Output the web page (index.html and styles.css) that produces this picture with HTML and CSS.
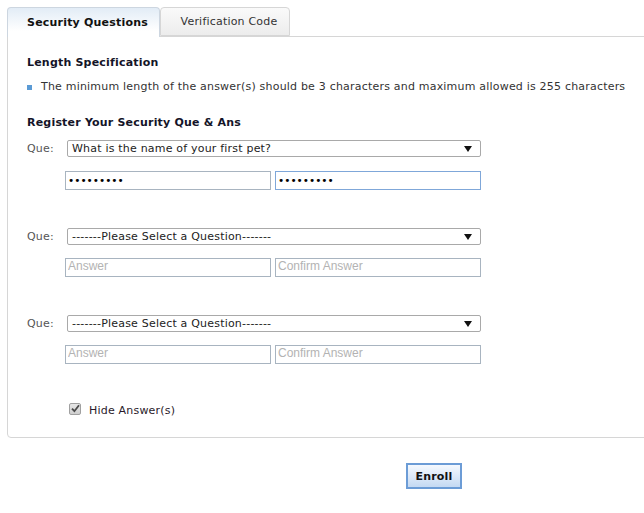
FILE: index.html
```html
<!DOCTYPE html>
<html>
<head>
<meta charset="utf-8">
<link rel="stylesheet" href="styles.css">
</head>
<body>
<div class="page">
  <div class="tabs">
    <div class="tab active">Security Questions</div>
    <div class="tab">Verification Code</div>
  </div>
  <div class="panel">
    <div class="heading h-len">Length Specification</div>
    <div class="bullet-line"><span class="bullet"></span><span>The minimum length of the answer(s) should be 3 characters and maximum allowed is 255 characters</span></div>
    <div class="heading h-reg">Register Your Security Que &amp; Ans</div>

    <div class="que-row first">
      <span class="que-label">Que:</span>
      <div class="select"><span class="select-text">What is the name of your first pet?</span><span class="arrow"></span></div>
    </div>
    <div class="ans-row">
      <input class="ans" type="password" value="abcdefghi">
      <input class="ans focused" type="password" value="abcdefghi">
    </div>

    <div class="que-row">
      <span class="que-label">Que:</span>
      <div class="select"><span class="select-text">-------Please Select a Question-------</span><span class="arrow"></span></div>
    </div>
    <div class="ans-row">
      <input class="ans plain" type="text" placeholder="Answer">
      <input class="ans plain" type="text" placeholder="Confirm Answer">
    </div>

    <div class="que-row">
      <span class="que-label">Que:</span>
      <div class="select"><span class="select-text">-------Please Select a Question-------</span><span class="arrow"></span></div>
    </div>
    <div class="ans-row">
      <input class="ans plain" type="text" placeholder="Answer">
      <input class="ans plain" type="text" placeholder="Confirm Answer">
    </div>

    <div class="hide-row">
      <span class="checkbox"><svg width="9" height="9" viewBox="0 0 9 9"><path d="M1 4.6 L3.4 7.2 L8 1.2" fill="none" stroke="#4a4a4a" stroke-width="1.8"/></svg></span>
      <span class="hide-text">Hide Answer(s)</span>
    </div>
  </div>
  <div class="actions">
    <button class="enroll">Enroll</button>
  </div>
</div>
</body>
</html>
```

FILE: styles.css
```css
html, body {
  margin: 0;
  padding: 0;
  background: #fff;
  overflow: hidden;
}
body {
  font-family: "DejaVu Sans", Verdana, sans-serif;
  font-size: 11px;
  letter-spacing: 0.2px;
  color: #333;
}
.page {
  width: 644px;
  height: 513px;
}
.tabs {
  display: flex;
  padding: 7px 0 0 7px;
  height: 29px;
  position: relative;
  z-index: 1;
}
.tab {
  box-sizing: border-box;
  height: 30px;
  border: 1px solid #d6d6d6;
  border-bottom: none;
  border-radius: 4px 4px 0 0;
  display: flex;
  align-items: center;
  justify-content: center;
}
.tab.active {
  width: 153px;
  background: linear-gradient(#e2ecf6, #ffffff 80%);
  border-color: #cdd6e0;
  font-weight: bold;
  color: #111;
  padding-left: 8px;
}
.tab:not(.active) {
  width: 130px;
  height: 29px;
  background: linear-gradient(#fafafa, #ececec);
  border-bottom: 1px solid #d6d6d6;
  color: #333;
  padding-left: 8px;
}
.panel {
  margin-left: 7px;
  margin-right: -20px;
  border: 1px solid #d6d6d6;
  border-radius: 0 0 4px 4px;
  height: 402px;
  padding-left: 19px;
  box-sizing: border-box;
}
.heading {
  font-weight: bold;
  color: #141428;
  line-height: 16px;
}
.h-len { margin-top: 18px; }
.bullet-line {
  margin-top: 8px;
  line-height: 16px;
  display: flex;
  align-items: center;
  white-space: nowrap;
}
.bullet {
  width: 5px;
  height: 5px;
  background: #5b9bd5;
  margin-right: 9px;
}
.h-reg { margin-top: 20px; }
.que-row {
  display: flex;
  align-items: center;
  margin-top: 38px;
}
.que-row.first { margin-top: 9px; }
.que-label {
  width: 40px;
  color: #555;
}
.select {
  box-sizing: border-box;
  width: 414px;
  height: 17px;
  border: 1px solid #a9a9a9;
  border-radius: 2px;
  display: flex;
  align-items: center;
  justify-content: space-between;
  padding: 0 8px 0 4px;
  color: #222;
}
.arrow {
  width: 0;
  height: 0;
  border-left: 4px solid transparent;
  border-right: 4px solid transparent;
  border-top: 6px solid #111;
}
.ans-row {
  display: flex;
  gap: 4px;
  margin-top: 13px;
  margin-left: 38px;
}
.que-row.first + .ans-row { margin-top: 14px; }
.ans {
  box-sizing: border-box;
  width: 206px;
  height: 19px;
  margin: 0;
  border: 1px solid #a8b4c0;
  padding: 0 2px 2px 2px;
  font-family: "DejaVu Sans", Verdana, sans-serif;
  font-size: 10.5px;
  color: #000;
  outline: none;
}
.ans.plain {
  padding: 0 2px 4px 2px;
}
.ans::placeholder {
  font-family: "Liberation Sans", Arial, sans-serif;
  font-size: 12px;
  letter-spacing: 0;
  color: #b3b3b3;
}
.ans.focused {
  border-color: #7fa7d9;
}
.hide-row {
  display: flex;
  align-items: center;
  margin-top: 38px;
  margin-left: 42px;
  line-height: 16px;
}
.checkbox {
  box-sizing: border-box;
  width: 12px;
  height: 12px;
  border: 1px solid #a0a0a0;
  border-radius: 2px;
  background: linear-gradient(#e6e6e6, #cfcfcf);
  display: flex;
  align-items: center;
  justify-content: center;
  margin-right: 8px;
  margin-top: -4px;
}
.hide-text { color: #2a1a2a; margin-top: 1px; }
.actions {
  padding-top: 25px;
  padding-left: 406px;
}
.enroll {
  box-sizing: border-box;
  width: 56px;
  height: 26px;
  border: 2px solid #6c9cd6;
  background: linear-gradient(#f5f9fe, #dbe8f8 55%, #c4d9f2);
  font-family: "DejaVu Sans", Verdana, sans-serif;
  font-size: 11px;
  font-weight: bold;
  letter-spacing: 0.2px;
  color: #111;
  padding: 0;
  cursor: pointer;
}
```
